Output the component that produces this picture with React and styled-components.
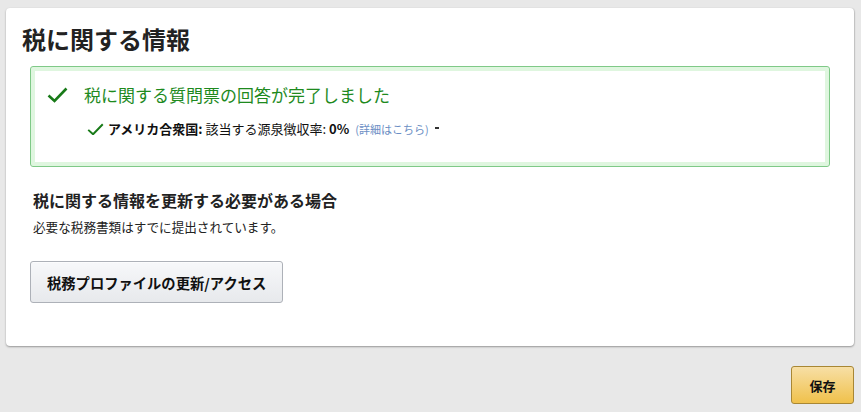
import styled, { createGlobalStyle } from "styled-components";

const GlobalStyle = createGlobalStyle`
  html, body {
    margin: 0;
    padding: 0;
    background: #e8e8e8;
  }
  body {
    font-family: "Noto Sans CJK JP", "Noto Sans", "Liberation Sans", sans-serif;
    color: #111;
  }
`;

const Page = styled.div`
  padding: 8px 7px 0 6px;
  display: flex;
  flex-direction: column;
`;

const Card = styled.section`
  background: #fff;
  border-radius: 4px;
  box-shadow: 0 1px 2px rgba(0, 0, 0, 0.35), 1px 0 1px rgba(0, 0, 0, 0.08);
  padding: 15px 16px 43px;
`;

const Title = styled.h1`
  margin: 0;
  font-size: 24px;
  line-height: 31px;
  font-weight: 700;
  color: #222;
`;

const Body = styled.div`
  padding: 12px 8px 0;
  display: flex;
  flex-direction: column;
  align-items: flex-start;
`;

const SuccessBox = styled.div`
  align-self: stretch;
  border: 1px solid #7fc987;
  border-radius: 3px;
  box-shadow: inset 0 0 0 4px #dff6df;
  padding: 16px 16px 27px;
`;

const Row = styled.div`
  display: flex;
  align-items: center;
  gap: ${(p) => p.$gap || 4}px;
  padding-left: ${(p) => p.$indent || 0}px;
  margin-top: ${(p) => p.$top || 0}px;
`;

const SuccessText = styled.span`
  font-size: 17px;
  line-height: 24px;
  color: #1e8a1e;
`;

const Detail = styled.span`
  font-size: 13px;
  line-height: 20px;
  color: #111;
  white-space: nowrap;

  b {
    font-weight: 700;
  }
`;

const InfoLink = styled.a`
  font-size: 11px;
  color: #6b8ec4;
  text-decoration: none;
  margin-left: 6px;
`;

const Caret = styled.span`
  display: inline-block;
  width: 4px;
  height: 2px;
  background: #333;
  margin-left: 6px;
  vertical-align: 5px;
`;

const SectionTitle = styled.h2`
  margin: 22px 0 0 3px;
  font-size: 16px;
  line-height: 22px;
  font-weight: 700;
  color: #222;
`;

const SectionText = styled.p`
  margin: 7px 0 0 3px;
  font-size: 12.6px;
  line-height: 18px;
  color: #222;
`;

const Button = styled.button`
  margin-top: 25px;
  height: 42px;
  padding: 0 16px;
  font-family: inherit;
  font-size: 14.3px;
  font-weight: 700;
  color: #111;
  border: 1px solid #adb1b8;
  border-radius: 3px;
  background: linear-gradient(to bottom, #f7f8fa, #e7e9ec);
  box-shadow: 0 1px 0 rgba(255, 255, 255, 0.6) inset;
  cursor: pointer;
`;

const Footer = styled.div`
  display: flex;
  justify-content: flex-end;
  padding-top: 20px;
`;

const SaveButton = styled.button`
  width: 63px;
  height: 38px;
  font-family: inherit;
  font-size: 13px;
  font-weight: 700;
  color: #111;
  border: 1px solid #a88734;
  border-radius: 3px;
  background: linear-gradient(to bottom, #f7dfa5, #f0c14b);
  cursor: pointer;
`;

function Check({ size, width = 2.6 }) {
  return (
    <svg width={size} height={size * 0.76} viewBox="0 0 21 16" fill="none">
      <path d="M1.5 8.5 L7.5 14 L19.5 1.5" stroke="#187a18" strokeWidth={width} />
    </svg>
  );
}

export default function App() {
  return (
    <>
      <GlobalStyle />
      <Page>
        <Card>
          <Title>税に関する情報</Title>
          <Body>
            <SuccessBox>
              <Row $gap={16}>
                <Check size={21} />
                <SuccessText>税に関する質問票の回答が完了しました</SuccessText>
              </Row>
              <Row $indent={40} $top={12} $gap={4}>
                <Check size={17} width={2.4} />
                <Detail>
                  <b>アメリカ合衆国:</b> 該当する源泉徴収率: <b>0%</b>
                  <InfoLink href="#">(詳細はこちら)</InfoLink>
                  <Caret />
                </Detail>
              </Row>
            </SuccessBox>
            <SectionTitle>税に関する情報を更新する必要がある場合</SectionTitle>
            <SectionText>必要な税務書類はすでに提出されています。</SectionText>
            <Button>税務プロファイルの更新/アクセス</Button>
          </Body>
        </Card>
        <Footer>
          <SaveButton>保存</SaveButton>
        </Footer>
      </Page>
    </>
  );
}
